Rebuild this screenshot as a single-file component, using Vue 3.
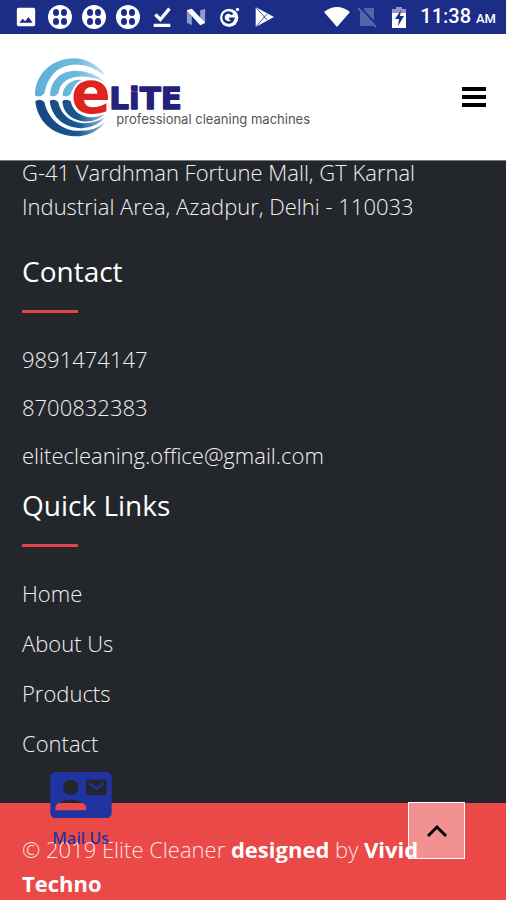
<script setup>
import { ref } from "vue";

const address = "G-41 Vardhman Fortune Mall, GT Karnal Industrial Area, Azadpur, Delhi - 110033";

const contacts = ref([
  { text: "9891474147", href: "tel:9891474147" },
  { text: "8700832383", href: "tel:8700832383" },
  { text: "elitecleaning.office@gmail.com", href: "mailto:elitecleaning.office@gmail.com" }
]);

const links = ref(["Home", "About Us", "Products", "Contact"]);

function scrollTop() {
  window.scrollTo({ top: 0, behavior: "smooth" });
}
</script>

<template>
  <div class="page">
    <div class="top">
      <div class="status">
        <div class="status-left">
          <svg viewBox="0 0 24 24" class="status-icon">
            <path fill-rule="evenodd" d="M3 1h18q2 0 2 2v18q0 2-2 2H3q-2 0-2-2V3q0-2 2-2zM4 19h16l-5-7-4 5-3-3z" />
          </svg>
          <svg v-for="n in 3" :key="n" viewBox="0 0 24 24" class="status-icon wide">
            <circle cx="12" cy="12" r="12" />
            <g class="hole">
              <ellipse cx="8" cy="7.500" rx="3" ry="3.500" />
              <ellipse cx="16" cy="7.500" rx="3" ry="3.500" />
              <ellipse cx="8" cy="16.500" rx="3" ry="3.500" />
              <ellipse cx="16" cy="16.500" rx="3" ry="3.500" />
            </g>
            <path d="M11 4h2v16h-2zM4 11h16v2H4z" />
          </svg>
          <svg viewBox="0 0 24 24" class="status-icon">
            <path class="line" d="M4 9l6 6L21 2M2 22h20" />
          </svg>
          <svg viewBox="0 0 24 24" class="status-icon">
            <path class="half" d="M1 4l6-2v20l-6-3zM17 4l6-2v17l-6 3z" />
            <path d="M1 4l6-2 16 17-6 3z" />
          </svg>
          <svg viewBox="0 0 24 24" class="status-icon">
            <circle cx="11" cy="13" r="11" />
            <circle cx="21" cy="3" r="2" />
            <path class="cut" d="M15 9a6 6 0 1 0 1 5h-5" />
          </svg>
          <svg viewBox="0 0 24 24" class="status-icon">
            <path d="M2 0l22 12L2 24z" />
            <path class="thin" d="M2 0l14 16M2 24L16 8" />
          </svg>
        </div>
        <div class="status-right">
          <svg viewBox="0 0 26 20" class="wifi"><path d="M0 5Q13-5 26 5L13 20z" /></svg>
          <svg viewBox="0 0 20 22" class="sim">
            <path class="faint" d="M8 2h9v18H3V7z" />
            <path class="gap" d="M2 0l18 19" />
            <path class="slash" d="M1 2l18 19" />
          </svg>
          <svg viewBox="0 0 14 22" class="battery">
            <path class="half" d="M4 1h6v2h4v6H0V3h4z" />
            <path d="M0 7h14v15H0z" />
            <path class="hole" d="M9 4l-6 9h4l-1 7 6-10H8z" />
          </svg>
          <span class="time">11:38 <small>AM</small></span>
        </div>
      </div>
      <header class="header">
        <a href="#" class="brand" aria-label="Elite professional cleaning machines">
          <svg viewBox="40 35 840 240" class="logo">
            <defs>
              <linearGradient id="sky" gradientUnits="userSpaceOnUse" x1="44" y1="0" x2="258" y2="0">
                <stop offset="0" stop-color="#5fafd9" />
                <stop offset="0.6" stop-color="#6dbadb" />
                <stop offset="1" stop-color="#c9e6f2" />
              </linearGradient>
              <linearGradient id="navy" gradientUnits="userSpaceOnUse" x1="44" y1="0" x2="258" y2="0">
                <stop offset="0" stop-color="#15457d" />
                <stop offset="0.6" stop-color="#185791" />
                <stop offset="1" stop-color="#a3c3da" />
              </linearGradient>
            </defs>
            <g fill="url(#sky)">
              <path d="M43 148C45 84 94 39 163 39Q220 42 256 93Q208 55 158 58C108 61 80 97 72 143Q60 157 48 152Q43 152 43 148z" />
              <path d="M88 149C91 101 124 75 168 76Q222 78 255 113Q212 90 172 94C137 97 117 116 113 144Q103 156 92 152Q88 152 88 149z" />
              <path d="M126 149C127 121 151 103 177 103Q226 105 251 128Q190 110 166 125Q151 134 150 147Q139 156 130 152Q126 152 126 149z" />
            </g>
            <g fill="url(#navy)">
              <path d="M44 168Q57 158 71 170C80 213 113 250 162 256Q218 260 253 232Q218 273 163 273C92 270 50 225 44 168z" />
              <path d="M87 167Q99 158 112 169C121 207 147 228 182 233Q220 236 253 216Q222 253 173 248C124 243 93 212 87 167z" />
              <path d="M125 167Q138 159 150 168C157 200 181 213 207 216Q235 217 254 203Q226 235 181 227C146 219 126 197 125 167z" />
            </g>
            <text x="151" y="203" class="logo-e">e</text>
            <text x="266" y="192" class="logo-name">LiTE</text>
            <text x="287" y="235" class="logo-tag">professional cleaning machines</text>
          </svg>
        </a>
        <button type="button" class="menu" aria-label="Menu">
          <svg viewBox="0 0 26 22"><path d="M1 1h24v4H1zM1 9h24v4H1zM1 17h24v4H1z" /></svg>
        </button>
      </header>
    </div>

    <footer>
      <div class="footer-main">
        <p class="address">{{ address }}</p>
        <h2>Contact</h2>
        <ul class="contacts">
          <li v-for="c in contacts" :key="c.text"><a :href="c.href">{{ c.text }}</a></li>
        </ul>
        <h2 class="quick">Quick Links</h2>
        <ul class="links">
          <li v-for="l in links" :key="l"><a href="#">{{ l }}</a></li>
        </ul>
      </div>
      <div class="copyright">
        © 2019 Elite Cleaner <b>designed</b> by <a href="#">Vivid Techno</a>
      </div>
    </footer>

    <a href="mailto:elitecleaning.office@gmail.com" class="mail">
      <svg viewBox="0 3 24 18">
        <path d="M21 8V7l-3 2-3-2v1l3 2 3-2zm1-5H2C.9 3 0 3.900 0 5v14c0 1.100.9 2 2 2h20c1.100 0 1.990-.9 1.990-2L24 5c0-1.100-.9-2-2-2zM8 6c1.660 0 3 1.340 3 3s-1.340 3-3 3-3-1.340-3-3 1.340-3 3-3zm6 12H2v-1c0-2 4-3.100 6-3.100s6 1.100 6 3.100v1zm8-6h-8V6h8v6z" />
      </svg>
      <span>Mail Us</span>
    </a>
    <button type="button" class="to-top" aria-label="Back to top" @click="scrollTop">
      <svg viewBox="0 0 22 14"><path d="M2 12l9-9 9 9" /></svg>
    </button>
  </div>
</template>

<style>
body {
  margin: 0;
  background: #23272b;
}
</style>

<style scoped>
.page {
  font-family: "Open Sans", "Noto Sans", sans-serif;
  font-size: 22px;
  font-weight: 300;
  line-height: 34px;
  color: #f0f0f0;
}

svg {
  display: block;
}

a {
  color: inherit;
  text-decoration: none;
}

button {
  padding: 0;
  cursor: pointer;
}

.top {
  position: sticky;
  top: 0;
  z-index: 10;
}

/* status bar */
.status {
  display: flex;
  align-items: center;
  justify-content: space-between;
  height: 34px;
  padding: 0 10px 0 16px;
  background: #1b2d87;
  box-sizing: border-box;
}

.status-left,
.status-right {
  display: flex;
  align-items: center;
}

.status-left {
  gap: 14px;
}

.status svg {
  fill: #fff;
}

.status-icon {
  width: 20px;
  height: 20px;
}

.status-icon.wide {
  width: 24px;
  height: 24px;
  margin: 0 -2px;
}

.status .hole {
  fill: #1b2d87;
}

.status .half {
  fill: #8f99cb;
}

.status .faint {
  fill: #5564aa;
}

.line {
  fill: none;
  stroke: #fff;
  stroke-width: 4;
}

.cut {
  fill: none;
  stroke: #1b2d87;
  stroke-width: 3;
}

.thin {
  stroke: #1b2d87;
  stroke-width: 1;
}

.gap {
  stroke: #1b2d87;
  stroke-width: 2;
}

.slash {
  stroke: #5564aa;
  stroke-width: 2;
}

.wifi {
  width: 26px;
  height: 20px;
}

.sim {
  width: 20px;
  height: 22px;
  margin-left: 7px;
}

.battery {
  width: 14px;
  height: 22px;
  margin: 0 14px 0 15px;
}

.time {
  font-family: Roboto, sans-serif;
  font-size: 20px;
  font-weight: 500;
  color: #fff;
}

.time small {
  font-size: 13px;
}

/* header */
.header {
  display: flex;
  align-items: center;
  justify-content: space-between;
  height: 127px;
  padding: 0 19px 0 34px;
  background: #fff;
  border-bottom: 1px solid #777b7d;
  box-sizing: border-box;
}

.logo {
  width: 280px;
  height: 80px;
}

.logo-e {
  font: bold 176px "DejaVu Sans", sans-serif;
  fill: #df2420;
  stroke: #fff;
  stroke-width: 12;
  paint-order: stroke;
}

.logo-name {
  font: bold 93px "DejaVu Sans", sans-serif;
  fill: #25207d;
  stroke: #25207d;
  stroke-width: 4;
  stroke-linejoin: round;
}

.logo-tag {
  font: 39px Inter, sans-serif;
  fill: #555;
}

.menu {
  border: 0;
  background: none;
}

.menu svg {
  width: 26px;
  height: 22px;
}

/* footer */
.footer-main {
  margin-top: -6px;
  padding: 0 22px 43px;
  background: #23272b;
}

.address {
  max-width: 440px;
  margin: 0;
}

h2 {
  margin: 31px 0 29px;
  font-size: 28px;
  font-weight: 400;
  line-height: 34px;
  color: #fff;
}

h2::after {
  content: "";
  display: block;
  width: 56px;
  height: 3px;
  margin-top: 22px;
  background: #df4548;
}

h2.quick {
  margin-top: 16px;
}

ul {
  display: flex;
  flex-direction: column;
  margin: 0;
  padding: 0;
  list-style: none;
}

.contacts {
  gap: 14px;
}

.links {
  gap: 16px;
}

.copyright {
  padding: 29px 60px 0 22px;
  background: #ea4948;
  color: #ffe4e2;
}

.copyright b,
.copyright a {
  font-weight: 700;
  color: #fff;
}

/* floating buttons */
.mail {
  position: fixed;
  left: 50px;
  bottom: 50px;
  z-index: 5;
  display: flex;
  flex-direction: column;
  align-items: center;
  gap: 8px;
  font-size: 16px;
  font-weight: 600;
  line-height: 24px;
  color: #2033a0;
}

.mail svg {
  width: 62px;
  height: 46px;
  fill: #2033a0;
}

.to-top {
  position: fixed;
  right: 41px;
  bottom: 41px;
  z-index: 5;
  display: flex;
  align-items: center;
  justify-content: center;
  width: 57px;
  height: 57px;
  border: 1px solid #fff;
  background: rgba(255, 255, 255, 0.4);
}

.to-top svg {
  width: 22px;
  height: 14px;
  fill: none;
  stroke: #000;
  stroke-width: 3;
}
</style>
